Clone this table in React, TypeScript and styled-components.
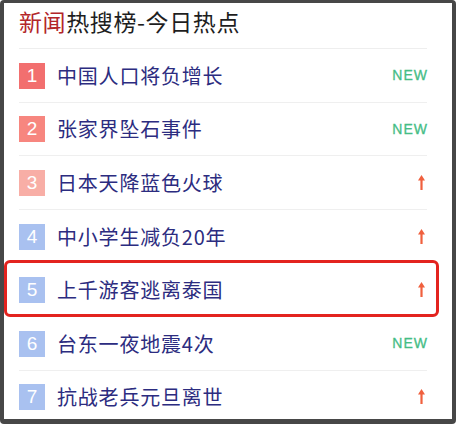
import React from "react";
import styled, { createGlobalStyle } from "styled-components";

const Global = createGlobalStyle`
  html, body { margin: 0; padding: 0; background: #fff; }
  body { font-family: "Noto Sans CJK SC", "Liberation Sans", sans-serif; }
`;

const Frame = styled.div`
  box-sizing: border-box;
  width: 456px;
  height: 424px;
  border: solid #474747;
  border-width: 3px 4px 5px 4px;
  border-radius: 4px;
  overflow: hidden;
  padding: 0 25px 0 15px;
  background: #fff;
`;

const Title = styled.h1`
  box-sizing: border-box;
  margin: 0;
  height: 46px;
  padding-top: 4px;
  font-family: "Noto Sans CJK SC", sans-serif;
  font-weight: 400;
  font-size: 23px;
  line-height: 28px;
  color: #1e1e1e;
  border-bottom: 1px solid #eeeeee;
  letter-spacing: 0.6px;
`;

const Accent = styled.span`
  color: #b3262a;
`;

const List = styled.ul`
  list-style: none;
  margin: 0;
  padding: 0;
`;

const Row = styled.li<{ $last?: boolean }>`
  position: relative;
  height: 52.6px;
  display: flex;
  align-items: center;
  border-bottom: ${(p) => (p.$last ? "none" : "1px solid #efefef")};
`;

const Badge = styled.span<{ $bg: string }>`
  flex: none;
  width: 26px;
  height: 26px;
  margin-top: 1px;
  background: ${(p) => p.$bg};
  color: #fff;
  font-family: "Liberation Sans", Arial, sans-serif;
  font-size: 19px;
  display: flex;
  align-items: center;
  justify-content: center;
`;

const Label = styled.span`
  flex: 1;
  margin-left: 12px;
  font-size: 20px;
  color: #2c2c80;
  letter-spacing: 0.8px;
  white-space: nowrap;
`;

const Marker = styled.span`
  flex: none;
  width: 44px;
  display: flex;
  justify-content: flex-end;
  align-items: center;
`;

const NewTag = styled.span`
  font-family: "Liberation Sans", Arial, sans-serif;
  font-size: 14px;
  font-weight: 400;
  color: #45bd86;
  letter-spacing: 1px;
  margin-right: -1px;
  -webkit-text-stroke: 0.3px #45bd86;
`;

const Arrow = styled.svg`
  width: 7px;
  height: 15px;
  margin-right: 2px;
  display: block;
`;

const Highlight = styled.span`
  position: absolute;
  left: -15px;
  right: -12px;
  top: -3px;
  bottom: -1px;
  border: 3px solid #e3231f;
  border-radius: 6px;
  pointer-events: none;
`;

type Item = { n: number; text: string; tag: "new" | "up"; bg: string; hl?: boolean };

const items: Item[] = [
  { n: 1, text: "中国人口将负增长", tag: "new", bg: "#f26f6f" },
  { n: 2, text: "张家界坠石事件", tag: "new", bg: "#f7867f" },
  { n: 3, text: "日本天降蓝色火球", tag: "up", bg: "#f8aea6" },
  { n: 4, text: "中小学生减负20年", tag: "up", bg: "#a9c1f0" },
  { n: 5, text: "上千游客逃离泰国", tag: "up", bg: "#a9c1f0", hl: true },
  { n: 6, text: "台东一夜地震4次", tag: "new", bg: "#a9c1f0" },
  { n: 7, text: "抗战老兵元旦离世", tag: "up", bg: "#a9c1f0" },
];

const UpArrow = () => (
  <Arrow viewBox="0 0 7 15">
    <path d="M3.5 0 L7 5.5 L4.6 5.5 L4.6 15 L2.4 15 L2.4 5.5 L0 5.5 Z" fill="#f0603e" />
  </Arrow>
);

export default function App() {
  return (
    <>
      <Global />
      <Frame>
        <Title>
          <Accent>新闻</Accent>热搜榜-今日热点
        </Title>
        <List>
          {items.map((it, i) => (
            <Row key={it.n} $last={i === items.length - 1}>
              <Badge $bg={it.bg}>{it.n}</Badge>
              <Label>{it.text}</Label>
              <Marker>{it.tag === "new" ? <NewTag>NEW</NewTag> : <UpArrow />}</Marker>
              {it.hl && <Highlight />}
            </Row>
          ))}
        </List>
      </Frame>
    </>
  );
}
